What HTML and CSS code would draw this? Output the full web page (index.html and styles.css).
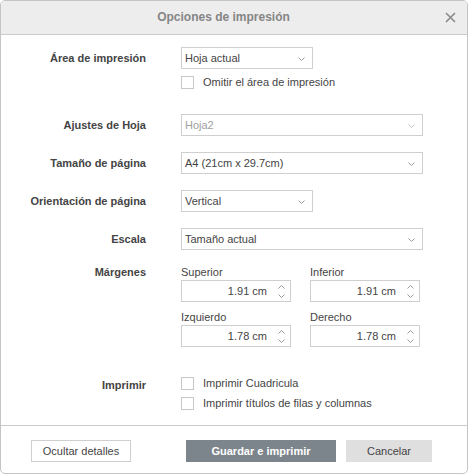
FILE: index.html
```html
<!DOCTYPE html>
<html lang="es">
<head>
<meta charset="utf-8">
<title>Opciones de impresión</title>
<link rel="stylesheet" href="styles.css">
</head>
<body>
<div class="dialog">
  <div class="header">
    <span class="title">Opciones de impresión</span>
    <svg class="close" width="11" height="11" viewBox="0 0 11 11"><path d="M1 1L10 10M10 1L1 10" stroke="#8a8a8a" stroke-width="1.6" fill="none"/></svg>
  </div>
  <div class="body">
    <div class="row r-area">
      <div class="label">Área de impresión</div>
      <div class="ctl">
        <div class="select narrow"><span>Hoja actual</span><svg class="arrow" width="7" height="4" viewBox="0 0 7 4"><path d="M0.5 0.5L3.5 3.5L6.5 0.5" stroke="#9a9a9a" fill="none"/></svg></div>
      </div>
    </div>
    <div class="row r-omit">
      <div class="label"></div>
      <label class="check"><span class="box"></span>Omitir el área de impresión</label>
    </div>
    <div class="row r-sheet">
      <div class="label">Ajustes de Hoja</div>
      <div class="select wide disabled"><span>Hoja2</span><svg class="arrow" width="7" height="4" viewBox="0 0 7 4"><path d="M0.5 0.5L3.5 3.5L6.5 0.5" stroke="#c4c4c4" fill="none"/></svg></div>
    </div>
    <div class="row r-gap">
      <div class="label">Tamaño de página</div>
      <div class="select wide"><span>A4 (21cm x 29.7cm)</span><svg class="arrow" width="7" height="4" viewBox="0 0 7 4"><path d="M0.5 0.5L3.5 3.5L6.5 0.5" stroke="#9a9a9a" fill="none"/></svg></div>
    </div>
    <div class="row r-gap">
      <div class="label">Orientación de página</div>
      <div class="select narrow"><span>Vertical</span><svg class="arrow" width="7" height="4" viewBox="0 0 7 4"><path d="M0.5 0.5L3.5 3.5L6.5 0.5" stroke="#9a9a9a" fill="none"/></svg></div>
    </div>
    <div class="row r-gap">
      <div class="label">Escala</div>
      <div class="select wide"><span>Tamaño actual</span><svg class="arrow" width="7" height="4" viewBox="0 0 7 4"><path d="M0.5 0.5L3.5 3.5L6.5 0.5" stroke="#9a9a9a" fill="none"/></svg></div>
    </div>
    <div class="row r-margins">
      <div class="label top">Márgenes</div>
      <div class="margins">
        <div class="field">
          <div class="flabel">Superior</div>
          <div class="spin"><span>1.91 cm</span><span class="spinbtns"><svg width="7" height="4" viewBox="0 0 7 4"><path d="M0.5 3.5L3.5 0.5L6.5 3.5" stroke="#9a9a9a" fill="none"/></svg><svg width="7" height="4" viewBox="0 0 7 4"><path d="M0.5 0.5L3.5 3.5L6.5 0.5" stroke="#9a9a9a" fill="none"/></svg></span></div>
        </div>
        <div class="field">
          <div class="flabel">Inferior</div>
          <div class="spin"><span>1.91 cm</span><span class="spinbtns"><svg width="7" height="4" viewBox="0 0 7 4"><path d="M0.5 3.5L3.5 0.5L6.5 3.5" stroke="#9a9a9a" fill="none"/></svg><svg width="7" height="4" viewBox="0 0 7 4"><path d="M0.5 0.5L3.5 3.5L6.5 0.5" stroke="#9a9a9a" fill="none"/></svg></span></div>
        </div>
        <div class="field">
          <div class="flabel">Izquierdo</div>
          <div class="spin"><span>1.78 cm</span><span class="spinbtns"><svg width="7" height="4" viewBox="0 0 7 4"><path d="M0.5 3.5L3.5 0.5L6.5 3.5" stroke="#9a9a9a" fill="none"/></svg><svg width="7" height="4" viewBox="0 0 7 4"><path d="M0.5 0.5L3.5 3.5L6.5 0.5" stroke="#9a9a9a" fill="none"/></svg></span></div>
        </div>
        <div class="field">
          <div class="flabel">Derecho</div>
          <div class="spin"><span>1.78 cm</span><span class="spinbtns"><svg width="7" height="4" viewBox="0 0 7 4"><path d="M0.5 3.5L3.5 0.5L6.5 3.5" stroke="#9a9a9a" fill="none"/></svg><svg width="7" height="4" viewBox="0 0 7 4"><path d="M0.5 0.5L3.5 3.5L6.5 0.5" stroke="#9a9a9a" fill="none"/></svg></span></div>
        </div>
      </div>
    </div>
    <div class="row r-print">
      <div class="label print-label">Imprimir</div>
      <div class="checks">
        <label class="check"><span class="box"></span>Imprimir Cuadricula</label>
        <label class="check"><span class="box"></span>Imprimir títulos de filas y columnas</label>
      </div>
    </div>
  </div>
  <div class="footer">
    <button class="btn btn-details">Ocultar detalles</button>
    <button class="btn btn-primary">Guardar e imprimir</button>
    <button class="btn btn-cancel">Cancelar</button>
  </div>
</div>
</body>
</html>
```

FILE: styles.css
```css
html, body {
  margin: 0;
  padding: 0;
  background: #ffffff;
}
body {
  font-family: "Liberation Sans", Arial, sans-serif;
  font-size: 11px;
  color: #444444;
}
.dialog {
  box-sizing: border-box;
  width: 468px;
  height: 474px;
  border: 1px solid #c4c4c4;
  border-radius: 5px;
  overflow: hidden;
  display: flex;
  flex-direction: column;
}
.header {
  position: relative;
  height: 33px;
  background: #ededed;
  border-bottom: 1px solid #cbcbcb;
  display: flex;
  align-items: center;
  justify-content: center;
  flex-shrink: 0;
}
.title {
  font-size: 12px;
  font-weight: bold;
  color: #858585;
  margin-right: 21px;
  margin-top: -1px;
}
.close {
  position: absolute;
  right: 11px;
  top: 11px;
}
.body {
  flex: 1;
  padding-top: 12px;
}
.row {
  display: flex;
  align-items: center;
}
.label {
  width: 145px;
  flex-shrink: 0;
  text-align: right;
  font-weight: bold;
  color: #444444;
  margin-right: 35px;
}
.label.top {
  align-self: flex-start;
  padding-top: 1px;
}
.r-omit { margin-top: 6px; }
.r-sheet { margin-top: 25px; }
.r-gap { margin-top: 16px; }
.r-margins { margin-top: 15px; align-items: flex-start; }
.r-print { margin-top: 29px; align-items: flex-start; }
.print-label { padding-top: 3px; }
.select {
  box-sizing: border-box;
  height: 22px;
  border: 1px solid #cfcfcf;
  background: #fff;
  display: flex;
  align-items: center;
  justify-content: space-between;
  padding: 0 7px 0 3px;
  color: #444444;
}
.select.narrow { width: 132px; }
.select.wide { width: 242px; }
.select.disabled { color: #a0a0a0; }
.arrow { margin-top: 1px; }
.check {
  display: flex;
  align-items: center;
  height: 14px;
  color: #444444;
}
.box {
  box-sizing: border-box;
  width: 13px;
  height: 13px;
  border: 1px solid #c8c8c8;
  background: #fff;
  margin-right: 9px;
}
.checks {
  display: flex;
  flex-direction: column;
  gap: 6px;
}
.margins {
  display: grid;
  grid-template-columns: 110px 110px;
  column-gap: 19px;
  row-gap: 8px;
}
.flabel {
  height: 14px;
  line-height: 14px;
  margin-bottom: 1px;
  color: #444444;
}
.spin {
  box-sizing: border-box;
  height: 22px;
  border: 1px solid #cfcfcf;
  display: flex;
  align-items: center;
  justify-content: flex-end;
  padding-right: 5px;
  color: #444444;
}
.spinbtns {
  display: flex;
  flex-direction: column;
  gap: 5px;
  margin-left: 11px;
}
.spinbtns svg { display: block; }
.footer {
  box-sizing: border-box;
  height: 48px;
  border-top: 1px solid #cbcbcb;
  display: flex;
  align-items: flex-start;
  padding: 14px 0 0 30px;
  flex-shrink: 0;
}
.btn {
  box-sizing: border-box;
  height: 22px;
  font-family: "Liberation Sans", Arial, sans-serif;
  font-size: 11px;
  padding: 0;
  cursor: pointer;
}
.btn-details {
  width: 100px;
  background: #fff;
  border: 1px solid #cfcfcf;
  color: #444444;
}
.btn-primary {
  width: 150px;
  margin-left: 55px;
  background: #7d858c;
  border: none;
  color: #ffffff;
  font-weight: bold;
}
.btn-cancel {
  width: 86px;
  margin-left: 10px;
  background: #dfdfdf;
  border: none;
  color: #444444;
}
```
